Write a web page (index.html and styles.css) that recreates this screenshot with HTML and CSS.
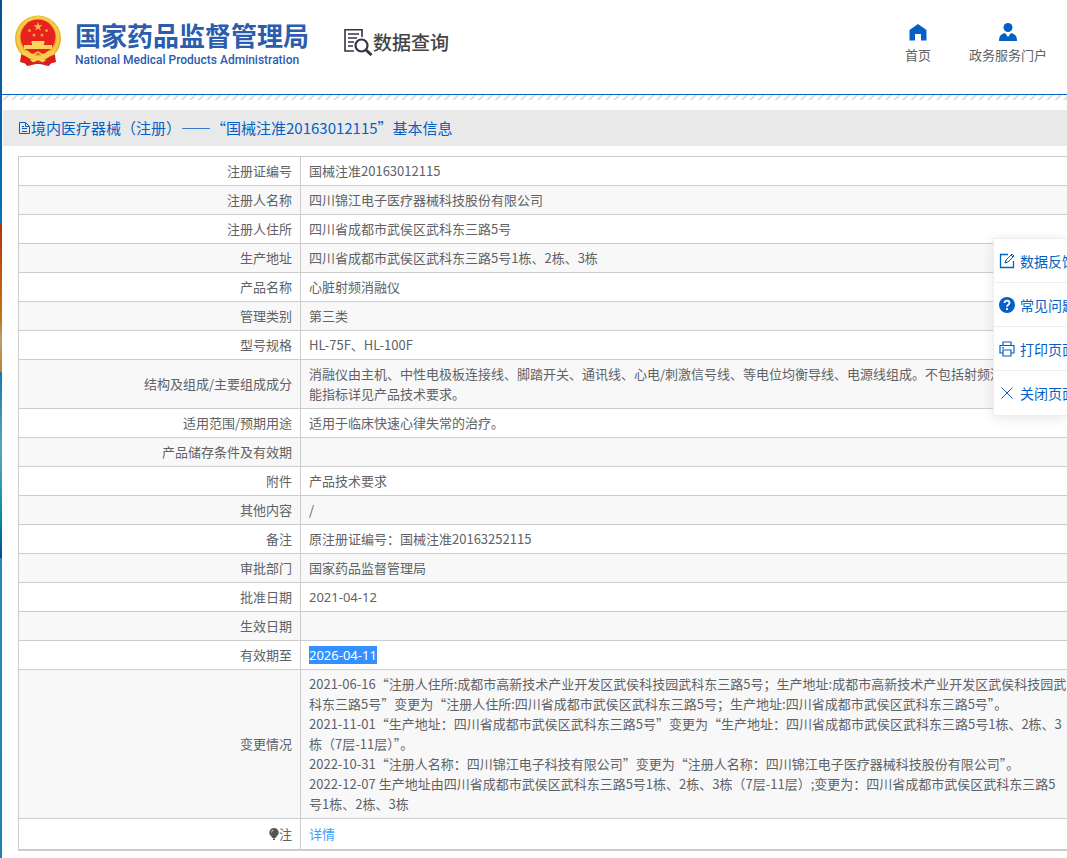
FILE: index.html
```
<!DOCTYPE html>
<html lang="zh-CN">
<head>
  <meta charset="utf-8">
  <title>国家药品监督管理局 数据查询</title>
  <link rel="stylesheet" href="styles.css">
</head>
<body>
  <div class="page">
    <header class="header">
      <a class="logo" href="#">
        <svg class="emblem" viewBox="0 0 46 52" width="46" height="52">
          <path d="M7 34L5 47l5 1 2 3 9-2h4l9 2 2-3 5-1-2-13z" fill="#d9201c"/>
          <ellipse cx="23" cy="23.500" rx="23" ry="23" fill="#ecb02c"/>
          <ellipse cx="23" cy="23" rx="20" ry="20.500" fill="none" stroke="#f7cb48" stroke-width="3"/>
          <circle cx="23" cy="22" r="17.500" fill="#e8231f"/>
          <path d="M23 7l1.100 3.200h3.400l-2.700 2 1 3.300-2.800-2-2.800 2 1-3.300-2.700-2h3.400z" fill="#f5b84a"/>
          <g fill="#f09a3c">
            <circle cx="14.500" cy="15.500" r="1.500"/><circle cx="31.500" cy="15.500" r="1.500"/>
            <circle cx="19" cy="20" r="1.500"/><circle cx="27" cy="20" r="1.500"/>
          </g>
          <path d="M17 26h12l1 2h-1v2h8v4H9v-4h8v-2h-1z" fill="#fbd45e"/>
          <path d="M6 35c5 0 9 6 17 6s12-6 17-6l-1 4c-4 1-8 5-16 5S11 40 7 39z" fill="#f8cf4c"/>
          <path d="M12 36q3 4 6 4l5-3 5 3q3 0 6-4" fill="none" stroke="#f8cf4c" stroke-width="1.500"/>
          <path d="M7 40c4 1 8 4 9 5l-2 5-8-3zM39 40c-4 1-8 4-9 5l2 5 8-3z" fill="#dd1d1a"/>
          <path d="M15 45l6-1h4l6 1-4 3-4-1-4 1z" fill="#fbd45a"/>
          <path d="M14 50l9-4 9 4" fill="none" stroke="#d9201c" stroke-width="1.500"/>
        </svg>
        <span class="logo-text">
          <strong>国家药品监督管理局</strong>
          <span class="logo-en">National Medical Products Administration</span>
        </span>
      </a>
      <a class="query" href="#">
        <svg viewBox="0 0 30 28" width="30" height="28" fill="none" stroke="#34334b">
          <path d="M19 9V1.800H2V23h9" stroke-width="1.600"/>
          <path d="M5 6h11M5 10h9M5 14h6M5 18h5" stroke-width="1.500"/>
          <circle cx="18.500" cy="17.500" r="6" stroke-width="2.200"/>
          <path d="M23 22l5.500 5" stroke-width="3"/>
        </svg>
        <span>数据查询</span>
      </a>
      <nav class="nav">
        <a href="#">
          <svg viewBox="0 0 18 18" width="18" height="18"><path d="M9 1l8.500 6v10.500H12V11H6v6.500H.5V7z" fill="#0560c4"/></svg>
          首页
        </a>
        <a href="#">
          <svg viewBox="0 0 18 18" width="18" height="18" fill="#0560c4"><circle cx="9" cy="4.500" r="4.500"/><path d="M0 18c0-5 2-7 6-8l3 4 3-4c4 1 6 3 6 8z"/></svg>
          政务服务门户
        </a>
      </nav>
    </header>
    <div class="hatch"></div>

    <main>
      <h1 class="title">
        <svg viewBox="0 0 13 14" width="13" height="14" fill="none" stroke="#0560c4"><path d="M1.500 1.500h6l4 4v7h-10zM7.500 1.500v4h4M4 5.500h2M4 7.500h5M4 10.500h5"/></svg>
        <span>境内医疗器械（注册）——“国械注准20163012115”基本信息</span>
      </h1>

      <table class="info">
        <tr><th>注册证编号</th><td>国械注准20163012115</td></tr>
        <tr><th>注册人名称</th><td>四川锦江电子医疗器械科技股份有限公司</td></tr>
        <tr><th>注册人住所</th><td>四川省成都市武侯区武科东三路5号</td></tr>
        <tr><th>生产地址</th><td>四川省成都市武侯区武科东三路5号1栋、2栋、3栋</td></tr>
        <tr><th>产品名称</th><td>心脏射频消融仪</td></tr>
        <tr><th>管理类别</th><td>第三类</td></tr>
        <tr><th>型号规格</th><td>HL-75F、HL-100F</td></tr>
        <tr><th>结构及组成/主要组成成分</th><td>消融仪由主机、中性电极板连接线、脚踏开关、通讯线、心电/刺激信号线、等电位均衡导线、电源线组成。不包括射频消融<br>能指标详见产品技术要求。</td></tr>
        <tr><th>适用范围/预期用途</th><td>适用于临床快速心律失常的治疗。</td></tr>
        <tr><th>产品储存条件及有效期</th><td></td></tr>
        <tr><th>附件</th><td>产品技术要求</td></tr>
        <tr><th>其他内容</th><td>/</td></tr>
        <tr><th>备注</th><td>原注册证编号：国械注准20163252115</td></tr>
        <tr><th>审批部门</th><td>国家药品监督管理局</td></tr>
        <tr><th>批准日期</th><td><span class="date">2021-04-12</span></td></tr>
        <tr><th>生效日期</th><td></td></tr>
        <tr><th>有效期至</th><td><mark class="date">2026-04-11</mark></td></tr>
        <tr>
          <th>变更情况</th>
          <td>2021-06-16“注册人住所:成都市高新技术产业开发区武侯科技园武科东三路5号；生产地址:成都市高新技术产业开发区武侯科技园武<br>
            科东三路5号”变更为“注册人住所:四川省成都市武侯区武科东三路5号；生产地址:四川省成都市武侯区武科东三路5号”。<br>
            2021-11-01“生产地址：四川省成都市武侯区武科东三路5号”变更为“生产地址：四川省成都市武侯区武科东三路5号1栋、2栋、3<br>
            栋（7层-11层）”。<br>
            2022-10-31“注册人名称：四川锦江电子科技有限公司”变更为“注册人名称：四川锦江电子医疗器械科技股份有限公司”。<br>
            2022-12-07 生产地址由四川省成都市武侯区武科东三路5号1栋、2栋、3栋（7层-11层）;变更为：四川省成都市武侯区武科东三路5<br>
            号1栋、2栋、3栋</td>
        </tr>
        <tr class="note">
          <th>
            <svg viewBox="0 0 10 12" width="10" height="12" fill="#555"><path d="M5 0a4.500 4.500 0 0 1 3 8L6.500 10h-3L2 8A4.500 4.500 0 0 1 5 0zM4 10.500h2V12H4z"/><path d="M2.500 4.500Q2.500 2.500 4.500 2" fill="none" stroke="#ccc"/></svg>注
          </th>
          <td><a href="#">详情</a></td>
        </tr>
      </table>
    </main>
  </div>

  <aside class="tools">
    <button type="button">
      <svg viewBox="0 0 16 16" width="16" height="16" fill="none" stroke="#0560c4"><path d="M9 1.500H1.500v13h13V8" stroke-width="1.300"/><path d="M6 10l1-3 6-6 2 2-6 6zM12 2l2 2"/></svg>
      数据反馈
    </button>
    <button type="button">
      <svg viewBox="0 0 16 16" width="16" height="16"><circle cx="8" cy="8" r="8" fill="#0560c4"/><path d="M5.500 6C5.500 2.800 10.500 3 10.500 6c0 1.800-2.500 1.700-2.500 3.700M8 11v2" fill="none" stroke="#fff" stroke-width="1.800"/></svg>
      常见问题
    </button>
    <button type="button">
      <svg viewBox="0 0 16 16" width="16" height="16" fill="none" stroke="#0560c4" stroke-width="1.200"><path d="M4 4.500V1h8v3.500M4 12H1V4.500h14V12h-3M4 9h8v6H4zM3 6.800h2"/></svg>
      打印页面
    </button>
    <button type="button">
      <svg viewBox="0 0 16 16" width="16" height="16" fill="none" stroke="#0560c4"><path d="M2.500 2.500l11 11M13.500 2.500l-11 11"/></svg>
      关闭页面
    </button>
  </aside>
</body>
</html>
```

FILE: styles.css
```
* {
  box-sizing: border-box;
}

html {
  overflow: hidden;
}

body {
  margin: 0;
  min-height: 100vh;
  padding-left: 2px;
  overflow: hidden;
  font-family: "Noto Sans CJK SC", sans-serif;
  font-size: 13px;
  line-height: 20px;
  color: #606266;
  background: linear-gradient(#0a4f96 0, #0872b8 224px, #b83208 224px, #c07818 320px, #b8a078 340px, #c08020 372px, #1878b0 372px, #58a8b8 450px, #0888a0 520px, #084890 558px, #2888b8 558px, #2080b0 100%);
}

a {
  color: inherit;
  text-decoration: none;
}

.page {
  min-height: 100vh;
  background: #fff;
}

.header {
  display: flex;
  align-items: flex-start;
  height: 95px;
  padding: 15px 20px 0 13px;
  border-bottom: 1px solid #0560c4;
}

.logo {
  display: flex;
  gap: 14px;
  color: #2b5dae;
}

.logo-text {
  display: flex;
  flex-direction: column;
  padding-top: 5px;
}

.logo-text strong {
  font-size: 26px;
  line-height: 30px;
}

.logo-en {
  font-family: Roboto, sans-serif;
  font-size: 12px;
  font-weight: 500;
}

.query {
  display: flex;
  align-items: center;
  margin-left: 34px;
  padding-top: 13px;
  font-size: 19px;
  font-weight: 500;
  color: #444;
}

.nav {
  display: flex;
  gap: 38px;
  margin-left: auto;
  padding-top: 8px;
}

.nav a {
  display: flex;
  flex-direction: column;
  align-items: center;
  gap: 4px;
}

.hatch {
  height: 5px;
  background: repeating-linear-gradient(135deg, #fff 0, #fff 3px, #e8e8e8 4px, #d4d4d4 5px, #fff 6px);
}

.title {
  display: flex;
  align-items: center;
  height: 36px;
  margin: 10px 0 10px 1px;
  padding-left: 15px;
  background: #e9e9e9;
  color: #0560c4;
  font-size: 15px;
  font-weight: normal;
  white-space: nowrap;
}

.info {
  width: calc(100% - 16px);
  margin-left: 16px;
  border-collapse: collapse;
  white-space: nowrap;
}

.info th,
.info td {
  height: 29px;
  padding: 4px 8px;
  border: 1px solid #ccc;
}

.info th {
  min-width: 282px;
  font-weight: normal;
  text-align: right;
}

.info td {
  border-right: none;
}

.info tr:nth-child(even) {
  background: #f8f8f8;
}

.info .note th,
.info .note td {
  padding: 5px 8px;
  border-bottom-width: 2px;
}

.note svg {
  vertical-align: -1px;
}

.note a {
  color: #409eff;
}

.date {
  font-family: "Noto Sans", sans-serif;
  line-height: 16px;
}

mark {
  background: #3390ff;
  color: #fff;
}

/* floating menu over the table */
.tools {
  position: fixed;
  top: 238px;
  right: 0;
  width: 74px;
  overflow: hidden;
  background: #fff;
  border: 1px solid #ebeef5;
  border-right: none;
  box-shadow: 0 2px 12px rgba(0, 0, 0, 0.1);
}

.tools button {
  display: flex;
  align-items: center;
  gap: 5px;
  width: 100%;
  height: 44px;
  padding: 0 5px;
  border: none;
  border-bottom: 1px solid #ebeef5;
  background: #fff;
  color: #0560c4;
  font-family: inherit;
  font-size: 14px;
  white-space: nowrap;
}

.tools button:last-child {
  border-bottom: none;
}

.tools svg {
  flex: none;
}
```
